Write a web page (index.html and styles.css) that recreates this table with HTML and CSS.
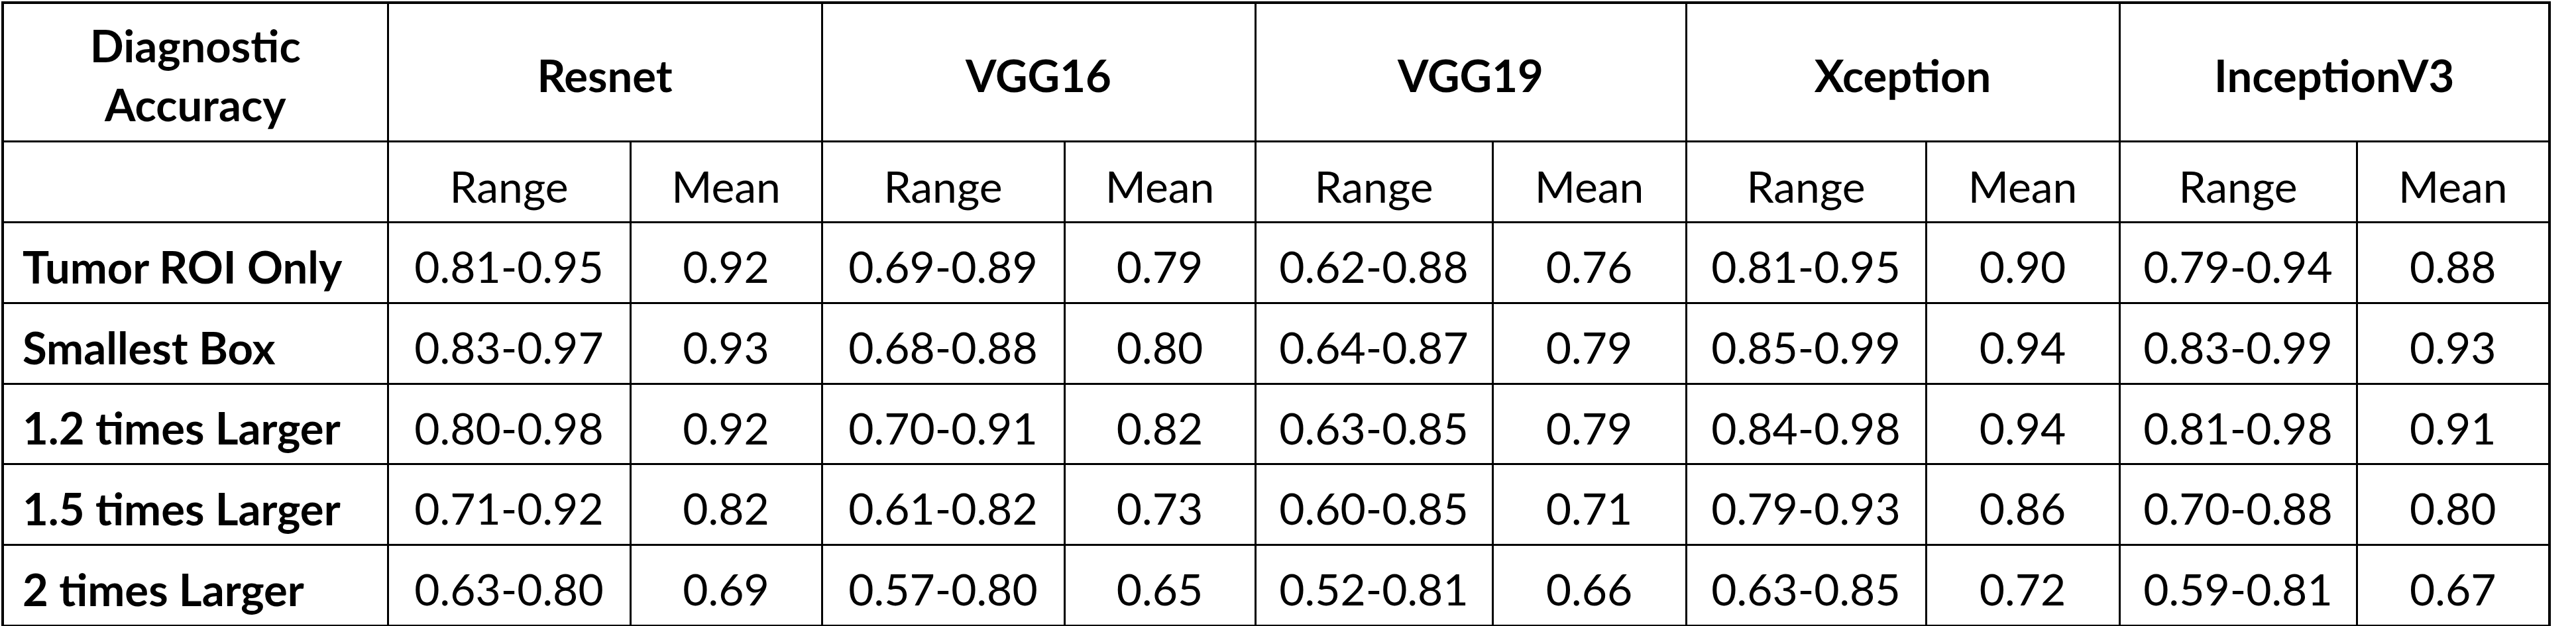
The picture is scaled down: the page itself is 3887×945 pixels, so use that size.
FILE: index.html
```html
<!DOCTYPE html>
<html lang="en">
<head>
<meta charset="utf-8">
<title>Diagnostic Accuracy</title>
<link rel="stylesheet" href="styles.css">
</head>
<body>
<table class="results">
  <colgroup>
    <col class="c-label">
    <col class="c1r"><col class="c1m">
    <col class="c2r"><col class="c2m">
    <col class="c3r"><col class="c3m">
    <col class="c4r"><col class="c4m">
    <col class="c5r"><col class="c5m">
  </colgroup>
  <thead>
    <tr class="row-models">
      <th class="corner">Diagnostic<br>Accuracy</th>
      <th colspan="2">Resnet</th>
      <th colspan="2">VGG16</th>
      <th colspan="2">VGG19</th>
      <th colspan="2">Xception</th>
      <th colspan="2">InceptionV3</th>
    </tr>
    <tr class="row-sub">
      <th class="blank"></th>
      <th>Range</th><th>Mean</th>
      <th>Range</th><th>Mean</th>
      <th>Range</th><th>Mean</th>
      <th>Range</th><th>Mean</th>
      <th>Range</th><th>Mean</th>
    </tr>
  </thead>
  <tbody>
    <tr>
      <th class="label">Tumor ROI Only</th>
      <td>0.81-0.95</td><td>0.92</td>
      <td>0.69-0.89</td><td>0.79</td>
      <td>0.62-0.88</td><td>0.76</td>
      <td>0.81-0.95</td><td>0.90</td>
      <td>0.79-0.94</td><td>0.88</td>
    </tr>
    <tr>
      <th class="label">Smallest Box</th>
      <td>0.83-0.97</td><td>0.93</td>
      <td>0.68-0.88</td><td>0.80</td>
      <td>0.64-0.87</td><td>0.79</td>
      <td>0.85-0.99</td><td>0.94</td>
      <td>0.83-0.99</td><td>0.93</td>
    </tr>
    <tr class="row-short">
      <th class="label">1.2 times Larger</th>
      <td>0.80-0.98</td><td>0.92</td>
      <td>0.70-0.91</td><td>0.82</td>
      <td>0.63-0.85</td><td>0.79</td>
      <td>0.84-0.98</td><td>0.94</td>
      <td>0.81-0.98</td><td>0.91</td>
    </tr>
    <tr>
      <th class="label">1.5 times Larger</th>
      <td>0.71-0.92</td><td>0.82</td>
      <td>0.61-0.82</td><td>0.73</td>
      <td>0.60-0.85</td><td>0.71</td>
      <td>0.79-0.93</td><td>0.86</td>
      <td>0.70-0.88</td><td>0.80</td>
    </tr>
    <tr>
      <th class="label">2 times Larger</th>
      <td>0.63-0.80</td><td>0.69</td>
      <td>0.57-0.80</td><td>0.65</td>
      <td>0.52-0.81</td><td>0.66</td>
      <td>0.63-0.85</td><td>0.72</td>
      <td>0.59-0.81</td><td>0.67</td>
    </tr>
  </tbody>
</table>
</body>
</html>
```

FILE: styles.css
```css
html, body {
  margin: 0;
  padding: 0;
  background: #ffffff;
}

.results {
  border-collapse: collapse;
  table-layout: fixed;
  width: 3843px;
  margin: 2px 0 0 2px;
  border: 4px solid #000;
  font-family: Lato, "Open Sans", sans-serif;
  color: #000;
}

.c-label { width: 581px; }
.c1r { width: 366px; }
.c1m { width: 289px; }
.c2r { width: 366px; }
.c2m { width: 288px; }
.c3r { width: 358px; }
.c3m { width: 292px; }
.c4r { width: 362px; }
.c4m { width: 292px; }
.c5r { width: 358px; }
.c5m { width: 291px; }

.results th,
.results td {
  border: 3px solid #000;
  padding: 0;
  text-align: center;
  vertical-align: top;
  white-space: nowrap;
}

.row-models th {
  font-size: 67px;
  font-weight: 700;
  padding-top: 9px;
  line-height: 197px;
}

.row-models .corner {
  padding-top: 18px;
  line-height: 89px;
}

.row-sub th {
  font-size: 66px;
  font-weight: 400;
  padding-top: 12px;
  line-height: 107px;
}

.results tbody th,
.results tbody td {
  font-size: 66px;
  font-weight: 400;
  padding-top: 11px;
  line-height: 108px;
}

.results tbody .row-short th,
.results tbody .row-short td {
  line-height: 107px;
}

.results tbody .label {
  font-size: 67px;
  font-weight: 700;
  text-align: left;
  padding-left: 28px;
}
```
